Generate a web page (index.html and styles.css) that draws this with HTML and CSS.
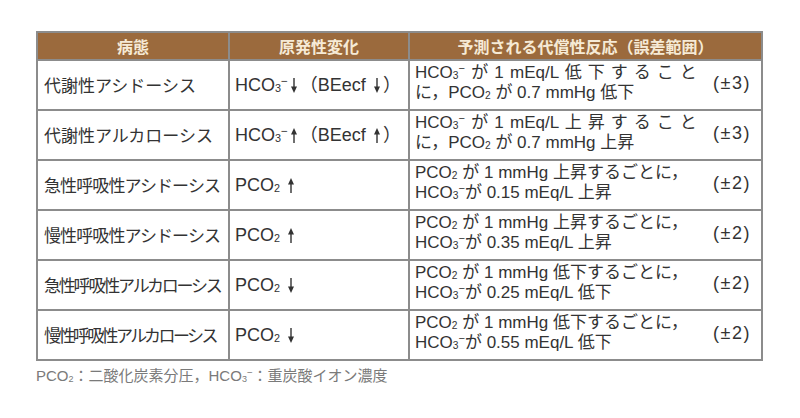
FILE: index.html
```html
<!DOCTYPE html>
<html lang="ja">
<head>
<meta charset="utf-8">
<title>酸塩基平衡異常と代償性反応</title>
<link rel="stylesheet" href="styles.css">
</head>
<body>
<div class="page">
  <table class="acid">
    <colgroup><col class="c1"><col class="c2"><col class="c3"></colgroup>
    <thead>
      <tr><th>病態</th><th>原発性変化</th><th>予測される代償性反応（誤差範囲）</th></tr>
    </thead>
    <tbody>
      <tr>
        <td class="name">代謝性アシドーシス</td>
        <td class="prim">HCO<sub>3</sub><sup>−</sup><svg class="arr" viewBox="0 0 6 15" aria-label="↓"><path d="M2.3 0h1.4v9.5H2.3z M0 8.6h6L3 15z"/></svg>（BEecf <svg class="arr" viewBox="0 0 6 15" aria-label="↓"><path d="M2.3 0h1.4v9.5H2.3z M0 8.6h6L3 15z"/></svg>）</td>
        <td class="comp"><div class="cwrap"><div class="desc"><div class="line wide">HCO<sub>3</sub><sup>−</sup> が 1 mEq/L <span class="spread">低下すること</span></div><div class="line">に，PCO<sub>2</sub> が 0.7 mmHg 低下</div></div><span class="tol">(±3)</span></div></td>
      </tr>
      <tr>
        <td class="name">代謝性アルカローシス</td>
        <td class="prim">HCO<sub>3</sub><sup>−</sup><svg class="arr" viewBox="0 0 6 15" aria-label="↑"><path d="M2.3 15h1.4V5.5H2.3z M0 6.4h6L3 0z"/></svg>（BEecf <svg class="arr" viewBox="0 0 6 15" aria-label="↑"><path d="M2.3 15h1.4V5.5H2.3z M0 6.4h6L3 0z"/></svg>）</td>
        <td class="comp"><div class="cwrap"><div class="desc"><div class="line wide">HCO<sub>3</sub><sup>−</sup> が 1 mEq/L <span class="spread">上昇すること</span></div><div class="line">に，PCO<sub>2</sub> が 0.7 mmHg 上昇</div></div><span class="tol">(±3)</span></div></td>
      </tr>
      <tr>
        <td class="name squeeze1">急性呼吸性アシドーシス</td>
        <td class="prim">PCO<sub>2</sub> <svg class="arr" viewBox="0 0 6 15" aria-label="↑"><path d="M2.3 15h1.4V5.5H2.3z M0 6.4h6L3 0z"/></svg></td>
        <td class="comp"><div class="cwrap"><div class="desc"><div class="line">PCO<sub>2</sub> が 1 mmHg 上昇するごとに，</div><div class="line">HCO<sub>3</sub><sup>−</sup>が 0.15 mEq/L 上昇</div></div><span class="tol">(±2)</span></div></td>
      </tr>
      <tr>
        <td class="name squeeze1">慢性呼吸性アシドーシス</td>
        <td class="prim">PCO<sub>2</sub> <svg class="arr" viewBox="0 0 6 15" aria-label="↑"><path d="M2.3 15h1.4V5.5H2.3z M0 6.4h6L3 0z"/></svg></td>
        <td class="comp"><div class="cwrap"><div class="desc"><div class="line">PCO<sub>2</sub> が 1 mmHg 上昇するごとに，</div><div class="line">HCO<sub>3</sub><sup>−</sup>が 0.35 mEq/L 上昇</div></div><span class="tol">(±2)</span></div></td>
      </tr>
      <tr>
        <td class="name squeeze2">急性呼吸性アルカローシス</td>
        <td class="prim">PCO<sub>2</sub> <svg class="arr" viewBox="0 0 6 15" aria-label="↓"><path d="M2.3 0h1.4v9.5H2.3z M0 8.6h6L3 15z"/></svg></td>
        <td class="comp"><div class="cwrap"><div class="desc"><div class="line">PCO<sub>2</sub> が 1 mmHg 低下するごとに，</div><div class="line">HCO<sub>3</sub><sup>−</sup>が 0.25 mEq/L 低下</div></div><span class="tol">(±2)</span></div></td>
      </tr>
      <tr>
        <td class="name squeeze3">慢性呼吸性アルカローシス</td>
        <td class="prim">PCO<sub>2</sub> <svg class="arr" viewBox="0 0 6 15" aria-label="↓"><path d="M2.3 0h1.4v9.5H2.3z M0 8.6h6L3 15z"/></svg></td>
        <td class="comp"><div class="cwrap"><div class="desc"><div class="line">PCO<sub>2</sub> が 1 mmHg 低下するごとに，</div><div class="line">HCO<sub>3</sub><sup>−</sup>が 0.55 mEq/L 低下</div></div><span class="tol">(±2)</span></div></td>
      </tr>
    </tbody>
  </table>
  <p class="note">PCO<sub>2</sub>：二酸化炭素分圧，HCO<sub>3</sub><sup>−</sup>：重炭酸イオン濃度</p>
</div>
</body>
</html>
```
FILE: styles.css
```css
html, body {
  margin: 0;
  padding: 0;
  background: #ffffff;
}
body {
  font-family: "Liberation Sans", "Noto Sans CJK JP", sans-serif;
  color: #333333;
}
.page {
  padding: 31px 0 0 36px;
}
.acid {
  width: 725px;
  border-collapse: collapse;
  table-layout: fixed;
}
.c1 { width: 192px; }
.c2 { width: 180px; }
.c3 { width: 353px; }
.acid th,
.acid td {
  border: 2px solid #8c8c8c;
}
.acid th {
  height: 26px;
  padding: 0;
  background: #9b6a3d;
  color: #f6ead6;
  font-family: "Noto Sans CJK JP", sans-serif;
  font-weight: 700;
  font-size: 16px;
  text-align: center;
  vertical-align: middle;
  line-height: 1;
}
.acid tbody tr {
  height: 50px;
}
.acid td {
  padding: 0 0 0 5px;
  vertical-align: middle;
  font-size: 17px;
  line-height: 20px;
  white-space: nowrap;
}
.acid td.name {
  padding-left: 6px;
  font-family: "Noto Sans CJK JP", sans-serif;
  font-size: 17px;
}
.acid td.squeeze1 { letter-spacing: -0.9px; }
.acid td.squeeze2 { letter-spacing: -2.2px; }
.acid td.squeeze3 { letter-spacing: -2.6px; }
.acid td.prim {
  font-size: 18px;
}
.acid td.comp {
  padding-bottom: 4px;
}
.cwrap {
  display: flex;
  align-items: center;
  justify-content: space-between;
  padding-right: 10px;
}
.desc {
  width: 290px;
}
.line.wide {
  word-spacing: 1.5px;
}
.spread {
  letter-spacing: 6px;
}
.tol {
  font-size: 18px;
  letter-spacing: 1.5px;
}
.arr {
  display: inline-block;
  width: 6px;
  height: 15px;
  margin: 0 3px;
  vertical-align: -2px;
  fill: #333333;
}
sub {
  font-size: 0.6em;
  vertical-align: -0.12em;
  line-height: 0;
}
sup {
  font-size: 0.65em;
  vertical-align: 0.5em;
  line-height: 0;
}
.note {
  margin: 5px 0 0 0;
  font-size: 15px;
  color: #7a7a7a;
  line-height: 20px;
}
```
